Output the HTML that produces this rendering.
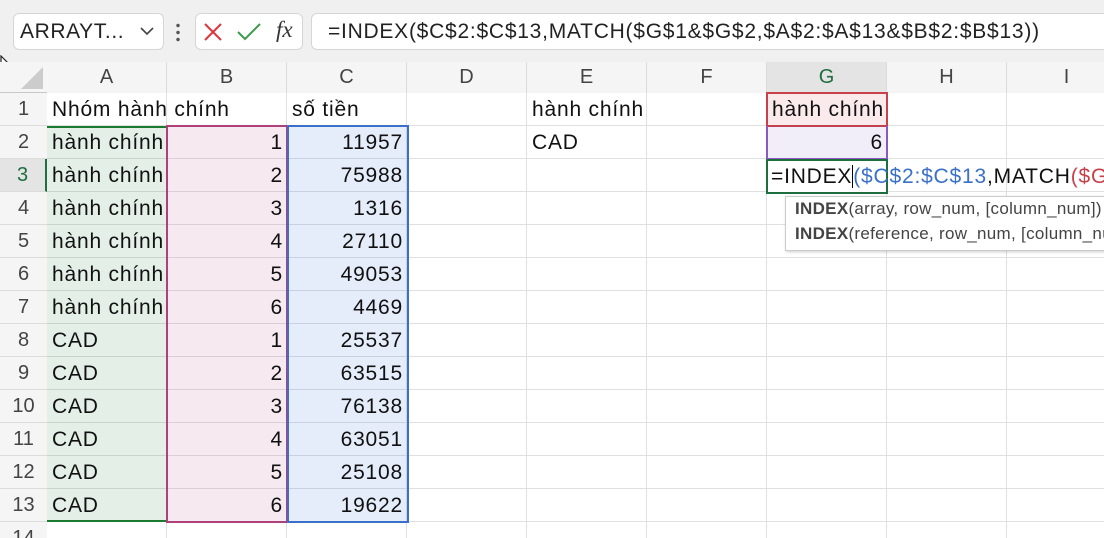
<!DOCTYPE html>
<html><head><meta charset="utf-8"><style>
*{margin:0;padding:0;box-sizing:border-box}
html,body{width:1104px;height:538px;overflow:hidden}
body{background:#f0f0f0;font-family:"Liberation Sans",sans-serif;position:relative}
.a{position:absolute}
.box{position:absolute;background:#fff;border:1px solid #d6d6d6;border-radius:6px}
.grid{position:absolute;left:47px;top:93px;width:1057px;height:445px;background-color:#fff;
background-image:linear-gradient(#e0e0e0 1px,transparent 1px),linear-gradient(90deg,#e0e0e0 1px,transparent 1px);
background-size:120px 33px,120px 33px;background-position:0 -1px,-1px 0}
.ch{position:absolute;top:62px;height:31px;width:120px;text-align:center;line-height:31px;font-size:20px;color:#444;border-right:1px solid #dcdcdc;background:#f5f5f5}
.rh{position:absolute;left:0;width:47px;height:33px;text-align:center;line-height:33px;font-size:20px;color:#444;background:#f5f5f5;border-bottom:1px solid #dcdcdc}
.c{position:absolute;height:33px;line-height:34px;font-size:21px;letter-spacing:0.8px;color:#111;white-space:nowrap;padding:0 5px}
.r{text-align:right;width:120px;padding-right:4px}
</style></head><body>
<div class="box" style="left:13px;top:13px;width:151px;height:37px"></div>
<div class="a" style="left:20px;top:20px;font-size:21px;letter-spacing:0.6px;color:#222">ARRAYT...</div>
<svg class="a" style="left:140px;top:26px" width="14" height="10"><path d="M1 2 L7 8 L13 2" fill="none" stroke="#444" stroke-width="1.6"/></svg>
<div class="a" style="left:176px;top:22px;width:4px;height:20px;background:radial-gradient(circle,#555 1.5px,transparent 2px) 0 0/4px 7px"></div>
<div class="box" style="left:195px;top:13px;width:108px;height:37px"></div>
<svg class="a" style="left:203px;top:22px" width="20" height="20"><path d="M2 2L18 18M18 2L2 18" stroke="#e0353a" stroke-width="2"/></svg>
<svg class="a" style="left:236px;top:22px" width="26" height="20"><path d="M2 10L9 17L24 2" fill="none" stroke="#3a9a4a" stroke-width="2"/></svg>
<div class="a" style="left:276px;top:17px;font-family:'Liberation Serif',serif;font-style:italic;font-size:23px;color:#333">fx</div>
<div class="box" style="left:311px;top:13px;width:800px;height:37px"></div>
<div class="a" style="left:328px;top:20px;font-size:21px;letter-spacing:0.75px;color:#222;white-space:nowrap">=INDEX($C$2:$C$13,MATCH($G$1&amp;$G$2,$A$2:$A$13&amp;$B$2:$B$13))</div>
<svg class="a" style="left:0;top:55px" width="20" height="28"><path d="M1 1L1 22L6 17L10 26L13 25L9 16L16 16Z" fill="#fff" stroke="#222" stroke-width="1.2"/></svg>
<div class="a" style="left:0;top:62px;width:47px;height:31px;background:#f5f5f5"></div>
<svg class="a" style="left:20px;top:66px" width="24" height="24"><path d="M23 1L23 23L1 23Z" fill="#ccc"/></svg>
<div class="a" style="left:0;top:92px;width:1104px;height:1px;background:#c8c8c8"></div>
<div class="ch" style="left:47px">A</div><div class="ch" style="left:167px">B</div><div class="ch" style="left:287px">C</div><div class="ch" style="left:407px">D</div><div class="ch" style="left:527px">E</div><div class="ch" style="left:647px">F</div><div class="ch" style="left:767px;background:#e4e4e4;color:#1e6e3e;border-bottom:2px solid #1e6e3e;height:32px">G</div><div class="ch" style="left:887px">H</div><div class="ch" style="left:1007px">I</div>
<div class="grid"></div>
<div class="a" style="left:46px;top:93px;width:1px;height:445px;background:#c8c8c8"></div>
<div class="rh" style="top:93px">1</div><div class="rh" style="top:126px">2</div><div class="rh" style="top:159px;background:#e4e4e4;color:#1e6e3e;border-right:2px solid #1e6e3e">3</div><div class="rh" style="top:192px">4</div><div class="rh" style="top:225px">5</div><div class="rh" style="top:258px">6</div><div class="rh" style="top:291px">7</div><div class="rh" style="top:324px">8</div><div class="rh" style="top:357px">9</div><div class="rh" style="top:390px">10</div><div class="rh" style="top:423px">11</div><div class="rh" style="top:456px">12</div><div class="rh" style="top:489px">13</div><div class="rh" style="top:522px">14</div>
<div class="a" style="left:47px;top:126px;width:120px;height:396px;background:rgba(30,130,60,0.12);border-top:2px solid #1a7a30;border-bottom:2px solid #1a7a30"></div>
<div class="a" style="left:166px;top:125px;width:122px;height:398px;background:rgba(170,50,110,0.10);border:2px solid #b0407a"></div>
<div class="a" style="left:287px;top:125px;width:122px;height:398px;background:rgba(50,110,210,0.12);border:2px solid #3a70c8"></div>
<div class="a" style="left:766px;top:92px;width:122px;height:35px;background:rgba(210,50,60,0.10);border:2px solid #c8404a"></div>
<div class="a" style="left:766px;top:126px;width:122px;height:34px;background:rgba(120,80,200,0.10);border:2px solid #8a5ac0;border-top:none"></div>
<div class="a" style="left:766px;top:159px;width:122px;height:35px;background:#fff;border:2px solid #1e6e3e"></div>
<div class="c" style="left:47px;top:93px">Nhóm hành chính</div>
<div class="c" style="left:287px;top:93px">số tiền</div>
<div class="c" style="left:527px;top:93px">hành chính</div>
<div class="c" style="left:527px;top:126px">CAD</div>
<div class="c" style="left:767px;top:93px">hành chính</div>
<div class="c r" style="left:767px;top:126px">6</div>
<div class="c" style="left:767px;top:160px;padding-left:4px">=INDEX<span style="border-left:1px solid #000"></span><span style="color:#3a70c8">($C$2:$C$13</span>,MATCH<span style="color:#c8404a">($G</span></div>
<div class="a" style="left:785px;top:196px;width:330px;height:55px;background:#fff;border:1px solid #ccc;box-shadow:1px 1px 3px rgba(0,0,0,.2)"></div>
<div class="a" style="left:795px;top:199px;font-size:17px;letter-spacing:0.3px;color:#444;white-space:nowrap"><b>INDEX</b>(array, row_num, [column_num])</div>
<div class="a" style="left:795px;top:224px;font-size:17px;letter-spacing:0.3px;color:#444;white-space:nowrap"><b>INDEX</b>(reference, row_num, [column_num])</div>
<div class="c" style="left:47px;top:126px">hành chính</div><div class="c r" style="left:167px;top:126px">1</div><div class="c r" style="left:287px;top:126px">11957</div>
<div class="c" style="left:47px;top:159px">hành chính</div><div class="c r" style="left:167px;top:159px">2</div><div class="c r" style="left:287px;top:159px">75988</div>
<div class="c" style="left:47px;top:192px">hành chính</div><div class="c r" style="left:167px;top:192px">3</div><div class="c r" style="left:287px;top:192px">1316</div>
<div class="c" style="left:47px;top:225px">hành chính</div><div class="c r" style="left:167px;top:225px">4</div><div class="c r" style="left:287px;top:225px">27110</div>
<div class="c" style="left:47px;top:258px">hành chính</div><div class="c r" style="left:167px;top:258px">5</div><div class="c r" style="left:287px;top:258px">49053</div>
<div class="c" style="left:47px;top:291px">hành chính</div><div class="c r" style="left:167px;top:291px">6</div><div class="c r" style="left:287px;top:291px">4469</div>
<div class="c" style="left:47px;top:324px">CAD</div><div class="c r" style="left:167px;top:324px">1</div><div class="c r" style="left:287px;top:324px">25537</div>
<div class="c" style="left:47px;top:357px">CAD</div><div class="c r" style="left:167px;top:357px">2</div><div class="c r" style="left:287px;top:357px">63515</div>
<div class="c" style="left:47px;top:390px">CAD</div><div class="c r" style="left:167px;top:390px">3</div><div class="c r" style="left:287px;top:390px">76138</div>
<div class="c" style="left:47px;top:423px">CAD</div><div class="c r" style="left:167px;top:423px">4</div><div class="c r" style="left:287px;top:423px">63051</div>
<div class="c" style="left:47px;top:456px">CAD</div><div class="c r" style="left:167px;top:456px">5</div><div class="c r" style="left:287px;top:456px">25108</div>
<div class="c" style="left:47px;top:489px">CAD</div><div class="c r" style="left:167px;top:489px">6</div><div class="c r" style="left:287px;top:489px">19622</div>
</body></html>
